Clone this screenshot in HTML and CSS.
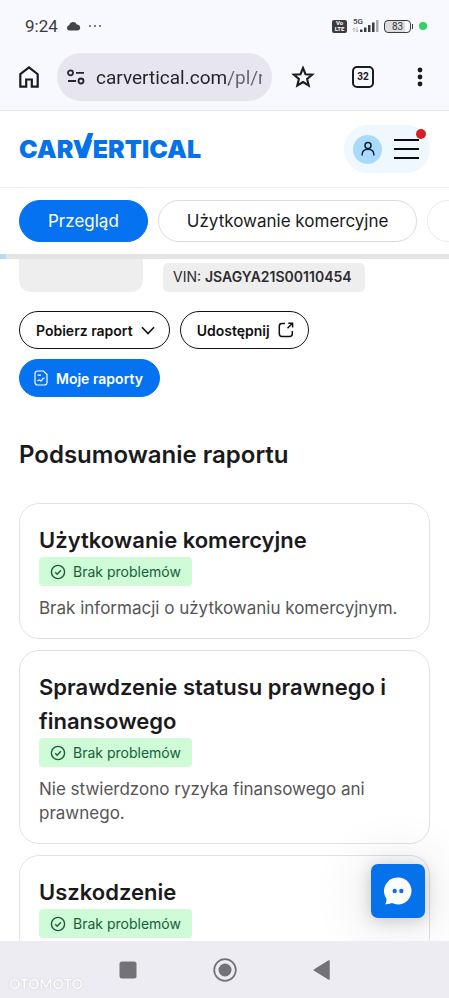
FILE: index.html
```html
<!DOCTYPE html>
<html lang="pl">
<head>
<meta charset="utf-8">
<meta name="viewport" content="width=device-width, initial-scale=1">
<title>carVertical – raport</title>
<link rel="stylesheet" href="styles.css">
</head>
<body>
<div class="status">
  <span class="status-time">9:24</span>
  <svg class="cloud" width="15" height="10" viewBox="0 0 15 10"><path d="M3.200 9.500A2.700 2.700 0 0 1 3 4.200 4.200 4.200 0 0 1 10.800 3.400 3.100 3.100 0 0 1 11.800 9.500Z" fill="#454549"/></svg>
  <svg width="14" height="4" viewBox="0 0 14 4" fill="#55555a"><circle cx="1" cy="2" r="1"/><circle cx="6" cy="2" r="1"/><circle cx="11" cy="2" r="1"/></svg>
  <div class="status-right">
    <span class="volte"><span>Vo</span><span>LTE</span></span>
    <span class="signal">
      <span class="signal-label">5G</span>
      <svg width="27" height="14" viewBox="0 0 27 14"><path d="M2 9v4M.5 10.500 2 9l1.500 1.500M5 8v5M3.800 11.500 5 13l1.200-1.500" fill="none" stroke="#aaaaaf" stroke-width=".8"/><path d="M8 10.500h2.500V13H8zM12 8.500h2.500V13H12zM16 6h2.500v7H16zM20 3.500h2.500V13H20z" fill="#3b3b40"/><path d="M24 1h2.500v12H24z" fill="#a9a9ae"/></svg>
    </span>
    <span class="battery">83</span>
    <span class="mic-dot"></span>
  </div>
</div>

<div class="toolbar">
  <button class="tool home" aria-label="Strona główna"><svg width="20" height="22" viewBox="0 0 20 22"><path d="M1.300 8.200 10 1.500l8.700 6.700v12.500h-5.900v-7.200H7.200v7.200H1.300Z" fill="none" stroke="#1b1b20" stroke-width="2.200"/></svg></button>
  <div class="address">
    <svg width="18" height="16" viewBox="0 0 18 16" fill="none" stroke="#26262c" stroke-width="1.800"><circle cx="3.500" cy="3.800" r="2.500"/><path d="M9 3.800h8M1 12h8"/><circle cx="14" cy="12" r="2.500"/></svg>
    <input class="url" type="text" aria-label="Adres strony" value="carvertical.com/pl/raport">
  </div>
  <button class="tool star" aria-label="Dodaj zakładkę"><svg width="24" height="24" viewBox="0 0 24 24"><path d="m12 3 2.500 6.200 6.700.5-5.100 4.300 1.600 6.500-5.700-3.500-5.700 3.500L7.900 14 2.800 9.700l6.700-.5Z" fill="none" stroke="#1b1b20" stroke-width="2.100"/></svg></button>
  <button class="tool tabs-count" aria-label="Karty: 32"><span>32</span></button>
  <button class="tool more" aria-label="Więcej"><svg width="6" height="20" viewBox="0 0 6 20" fill="#1b1b20"><circle cx="3" cy="3" r="2.400"/><circle cx="3" cy="10" r="2.400"/><circle cx="3" cy="17" r="2.400"/></svg></button>
</div>

<header class="site-header">
  <a class="logo" href="#">CAR<span class="logo-v">V<svg width="22" height="25" viewBox="0 0 22 25"><path d="M5.500 25 15 0h5.500L12 25Z" fill="#0572ec"/></svg></span>ERTICAL</a>
  <div class="account">
    <button class="avatar" aria-label="Konto"><svg width="16" height="16" viewBox="0 0 16 16" fill="none" stroke="#10202c" stroke-width="1.500"><circle cx="8" cy="4.500" r="3"/><path d="M2 14.500c0-4.200 2.500-6.200 6-6.200s6 2 6 6.200"/></svg></button>
    <button class="menu" aria-label="Menu"><svg width="25" height="22" viewBox="0 0 25 22"><path d="M0 2h25M0 11h25M0 20h25" stroke="#0b0b0d" stroke-width="1.800"/></svg></button>
    <span class="alert-dot"></span>
  </div>
</header>

<nav class="section-tabs">
  <a class="pill pill-active" href="#">Przegląd</a>
  <a class="pill" href="#">Użytkowanie komercyjne</a>
  <a class="pill pill-next" href="#" aria-label="Następna sekcja"></a>
</nav>
<div class="progress"><div class="progress-fill"></div></div>

<main class="content">
  <div class="vehicle">
    <div class="photo"></div>
    <div class="vin">VIN: <b>JSAGYA21S00110454</b></div>
  </div>
  <div class="actions">
    <button class="btn">Pobierz raport<svg width="14" height="9" viewBox="0 0 14 9"><path d="m1 1.200 6 6.300 6-6.300" fill="none" stroke="#111" stroke-width="1.600"/></svg></button>
    <button class="btn">Udostępnij<svg width="16" height="16" viewBox="0 0 16 16" fill="none" stroke="#111" stroke-width="1.500"><path d="M7 1.500H4A2.700 2.700 0 0 0 1.300 4.200v7.600A2.700 2.700 0 0 0 4 14.500h7.600a2.700 2.700 0 0 0 2.700-2.700V9M9.500 6.300 14.500 1.300M10.300 1.300h4.300v4.300"/></svg></button>
    <button class="btn btn-primary"><svg width="14" height="16" viewBox="0 0 14 16" fill="none" stroke="#fff" stroke-width="1.200"><path d="M3.500 1h6L13 4.500v8A2.500 2.500 0 0 1 10.500 15h-7A2.500 2.500 0 0 1 1 12.500v-9A2.500 2.500 0 0 1 3.500 1ZM3.500 5.200h3.500M3.500 11.200c1-1.500 2-1.500 2.800-.7s1.500.3 1.900-1 1.200-1.300 2.300-1.300"/></svg>Moje raporty</button>
  </div>
  <h1>Podsumowanie raportu</h1>
  <section class="cards">
    <article class="card">
      <h2>Użytkowanie komercyjne</h2>
      <span class="badge"><svg width="16" height="16" viewBox="0 0 16 16" fill="none" stroke="#14603a" stroke-width="1.400"><circle cx="8" cy="8" r="6.600"/><path d="m5.200 8.200 2 2 3.700-4"/></svg>Brak problemów</span>
      <p>Brak informacji o użytkowaniu komercyjnym.</p>
    </article>
    <article class="card">
      <h2>Sprawdzenie statusu prawnego i finansowego</h2>
      <span class="badge"><svg width="16" height="16" viewBox="0 0 16 16" fill="none" stroke="#14603a" stroke-width="1.400"><circle cx="8" cy="8" r="6.600"/><path d="m5.200 8.200 2 2 3.700-4"/></svg>Brak problemów</span>
      <p>Nie stwierdzono ryzyka finansowego ani prawnego.</p>
    </article>
    <article class="card">
      <h2>Uszkodzenie</h2>
      <span class="badge"><svg width="16" height="16" viewBox="0 0 16 16" fill="none" stroke="#14603a" stroke-width="1.400"><circle cx="8" cy="8" r="6.600"/><path d="m5.200 8.200 2 2 3.700-4"/></svg>Brak problemów</span>
    </article>
  </section>
  <button class="chat" aria-label="Czat"><svg width="28" height="28" viewBox="0 0 28 28"><path d="M14 .5a13.500 13.500 0 1 1-6 25.600c-1.900.9-4.300 1.300-6.800 1.100 1.100-1.700 1.500-3.500 1.300-5.500A13.500 13.500 0 0 1 14 .5Z" fill="#fff"/><circle cx="10.700" cy="14" r="2.200" fill="#0572ec"/><circle cx="17.300" cy="14" r="2.200" fill="#0572ec"/></svg></button>
</main>

<footer class="system-nav">
  <span class="watermark">OTOMOTO</span>
  <button aria-label="Ostatnie"><svg width="18" height="18" viewBox="0 0 18 18"><rect x=".5" y=".5" width="17" height="17" rx="2.500" fill="#737277"/></svg></button>
  <button aria-label="Ekran główny"><svg width="24" height="24" viewBox="0 0 24 24"><circle cx="12" cy="12" r="10.800" fill="none" stroke="#737277" stroke-width="1.700"/><circle cx="12" cy="12" r="6.500" fill="#737277"/></svg></button>
  <button aria-label="Wstecz"><svg width="18" height="20" viewBox="0 0 18 20"><path d="M16 1v18L1.500 10Z" fill="#737277" stroke="#737277" stroke-width="1.500" stroke-linejoin="round"/></svg></button>
</footer>
</body>
</html>
```
FILE: styles.css
```css
* { box-sizing: border-box; }
body {
  margin: 0;
  height: 100vh;
  display: flex;
  flex-direction: column;
  overflow: hidden;
  background: #fff;
  color: #1a1a1c;
  font-family: Inter, "Liberation Sans", sans-serif;
}
button { border: 0; padding: 0; background: none; font: inherit; color: inherit; }
a { color: inherit; text-decoration: none; }
svg { display: block; flex: none; }
h1, h2, p { margin: 0; }

.status {
  display: flex;
  align-items: center;
  gap: 8px;
  height: 44px;
  padding: 8px 22px 0 25px;
  background: #f8f8ff;
  font-family: Roboto, sans-serif;
  color: #3b3b40;
  flex: none;
}
.status-time { font-size: 17px; }
.status-right { display: flex; align-items: center; gap: 5px; margin-left: auto; }
.volte {
  display: flex;
  flex-direction: column;
  align-items: center;
  justify-content: center;
  width: 15px;
  height: 13px;
  border-radius: 2px;
  background: #3b3b40;
  color: #fff;
  font-size: 6px;
  font-weight: 700;
  line-height: 6px;
}
.signal { position: relative; }
.signal-label { position: absolute; left: 1px; top: -1px; font-size: 8px; line-height: 8px; font-weight: 500; }
.battery {
  position: relative;
  width: 27px;
  height: 13px;
  border: 1px solid #3b3b40;
  border-radius: 4px;
  background: linear-gradient(90deg, #dcdce2 80%, #f8f8ff 80%);
  font-size: 10px;
  line-height: 11px;
  text-align: center;
  margin-right: 3px;
}
.battery::after { content: ""; position: absolute; right: -3px; top: 3px; width: 1px; height: 5px; background: #3b3b40; }
.mic-dot { width: 8px; height: 8px; border-radius: 50%; background: #35cf64; }

.toolbar {
  display: flex;
  align-items: center;
  height: 67px;
  padding: 0 17px 0 19px;
  background: #f8f8ff;
  border-bottom: 1px solid #e6e5ec;
  flex: none;
}
.tool { display: flex; align-items: center; justify-content: center; flex: none; }
.home { width: 20px; }
.address {
  display: flex;
  align-items: center;
  gap: 11px;
  flex: 1;
  min-width: 0;
  height: 48px;
  margin-left: 18px;
  padding: 0 10px;
  border-radius: 24px;
  background: #e7e5ee;
}
.url {
  flex: 1;
  min-width: 0;
  padding: 0;
  border: 0;
  outline: 0;
  font-family: Roboto, sans-serif;
  font-size: 19px;
  color: transparent;
  background: linear-gradient(90deg, #222228 79%, #66656d 81%);
  -webkit-background-clip: text;
  background-clip: text;
}
.star { width: 24px; margin-left: 19px; }
.tabs-count { width: 22px; height: 22px; margin-left: 37px; }
.tabs-count span {
  width: 22px;
  height: 22px;
  border: 2px solid #1b1b20;
  border-radius: 5px;
  font: 700 10px/18px Roboto, sans-serif;
  text-align: center;
}
.more { width: 24px; margin-left: 34px; }

.site-header {
  display: flex;
  align-items: center;
  justify-content: space-between;
  height: 77px;
  padding: 0 19px;
  border-bottom: 1px solid #eeeef0;
  flex: none;
}
.logo { color: #0572ec; font-size: 25px; font-weight: 900; line-height: 32px; }
.logo-v { position: relative; }
.logo-v svg { position: absolute; left: 0; bottom: 6px; }
.account {
  position: relative;
  display: flex;
  align-items: center;
  gap: 12px;
  height: 48px;
  padding: 0 11px 0 9px;
  border-radius: 24px;
  background: #eff7ff;
}
.avatar { display: flex; align-items: center; justify-content: center; width: 29px; height: 29px; border-radius: 50%; background: #a9dafd; }
.alert-dot { position: absolute; right: 4px; top: 4px; width: 10px; height: 10px; border-radius: 50%; background: #d91f26; }

.section-tabs { display: flex; gap: 10px; padding: 12px 0 12px 19px; overflow: hidden; flex: none; }
.pill {
  display: flex;
  align-items: center;
  height: 42px;
  padding: 0 28px;
  border: 1px solid #dcdcdf;
  border-radius: 21px;
  font-size: 17px;
  white-space: nowrap;
  flex: none;
}
.pill-active { background: #0572f2; border-color: #0572f2; color: #fff; }
.pill-next { width: 120px; border-color: #ececee; }
.progress { height: 5px; background: #e4e4e5; flex: none; }
.progress-fill { width: 6px; height: 5px; background: #b5dcf8; }

.content { position: relative; flex: 1; min-height: 0; overflow: hidden; padding: 0 19px; }
.vehicle { display: flex; align-items: flex-end; gap: 20px; }
.photo { width: 124px; height: 33px; border-radius: 0 0 12px 12px; background: #eee; }
.vin { height: 29px; padding: 0 13px 0 10px; border-radius: 5px; background: #eee; color: #2c2c2f; font-size: 14px; line-height: 28px; white-space: nowrap; }
.vin b { font-weight: 600; }
.actions { display: flex; flex-wrap: wrap; gap: 10px; margin-top: 19px; }
.btn {
  display: flex;
  align-items: center;
  gap: 8px;
  height: 38px;
  padding: 0 14px 0 16px;
  border: 1px solid #111;
  border-radius: 19px;
  color: #111;
  font-size: 14px;
  font-weight: 600;
}
.btn-primary { padding: 0 16px 0 14px; background: #0572f2; border-color: #0572f2; color: #fff; }
h1 { margin: 40px 0 30px; font-size: 24px; line-height: 36px; font-weight: 600; }
.cards { display: flex; flex-direction: column; gap: 11px; }
.card { padding: 19px 19px 18px; border: 1px solid #e2e2e4; border-radius: 20px; background: #fff; }
.card h2 { font-size: 22px; line-height: 34px; font-weight: 600; }
.badge {
  display: flex;
  align-items: center;
  gap: 7px;
  width: fit-content;
  height: 29px;
  padding: 0 11px;
  border-radius: 4px;
  background: #cffbd6;
  color: #14603a;
  font-size: 14px;
}
.card p { margin-top: 10px; color: #555558; font-size: 17px; line-height: 24px; }
.chat {
  position: absolute;
  right: 24px;
  bottom: 23px;
  display: flex;
  align-items: center;
  justify-content: center;
  width: 54px;
  height: 54px;
  border-radius: 7px;
  background: #0572ec;
  box-shadow: 0 2px 16px rgba(0, 0, 0, .18), 0 4px 60px rgba(0, 0, 0, .16);
}

.system-nav {
  position: relative;
  display: flex;
  align-items: center;
  justify-content: center;
  gap: 76px;
  height: 57px;
  background: #edecf3;
  flex: none;
}
.watermark { position: absolute; left: 9px; bottom: 7px; color: #fff; font-size: 14px; line-height: 15px; font-weight: 700; font-family: Lato, sans-serif; text-shadow: 0 0 1px #aaa; }
```
